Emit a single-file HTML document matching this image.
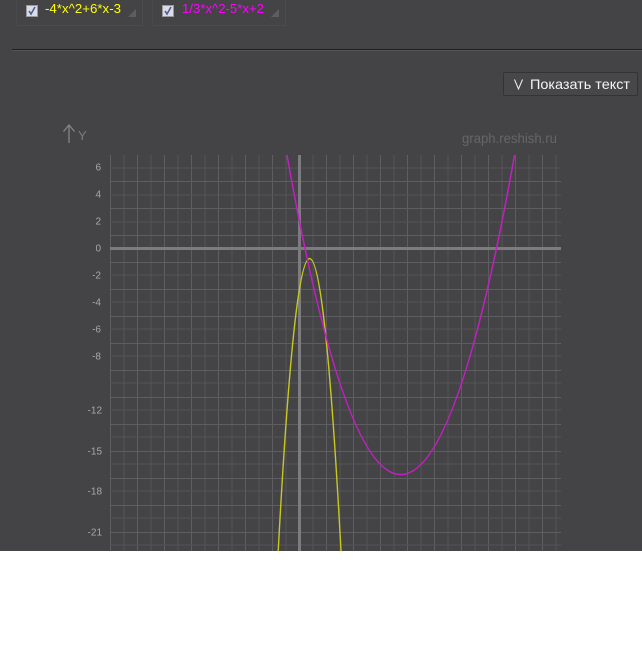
<!DOCTYPE html>
<html>
<head>
<meta charset="utf-8">
<style>
html,body{margin:0;padding:0;background:#fff;}
body{width:642px;height:656px;overflow:hidden;position:relative;font-family:"Liberation Sans",sans-serif;}
svg{position:absolute;left:0;top:0;display:block;}
</style>
</head>
<body>
<svg width="642" height="656" viewBox="0 0 642 656" xmlns="http://www.w3.org/2000/svg" font-family="Liberation Sans, sans-serif">
  <rect x="0" y="0" width="642" height="551" fill="#444446"/>

  <!-- Top equation boxes -->
  <path d="M16.5 0V25.5H142.5V0" fill="none" stroke="#4b4b4d"/>
  <path d="M152.5 0V25.5H285.5V0" fill="none" stroke="#4b4b4d"/>
  <polygon points="136,9 136,17 128,17" fill="#5e5e60"/>
  <polygon points="279,9 279,17 271,17" fill="#5e5e60"/>

  <rect x="26.5" y="5.5" width="11" height="11" fill="#dcdce6" stroke="#9a9a9e"/>
  <path d="M29 11l2 3 4-7" fill="none" stroke="#4a5f9c" stroke-width="1.6"/>
  <rect x="162.5" y="5.5" width="11" height="11" fill="#dcdce6" stroke="#9a9a9e"/>
  <path d="M165 11l2 3 4-7" fill="none" stroke="#4a5f9c" stroke-width="1.6"/>

  <text x="45" y="13" font-size="13" fill="#ffff00" textLength="76" lengthAdjust="spacingAndGlyphs">-4*x^2+6*x-3</text>
  <text x="182" y="13" font-size="13" fill="#ff00ff" textLength="82" lengthAdjust="spacingAndGlyphs">1/3*x^2-5*x+2</text>

  <!-- Divider -->
  <rect x="12" y="49" width="630" height="1" fill="#1f1f1f"/>
  <rect x="12" y="50" width="630" height="1" fill="#555557"/>

  <!-- Button -->
  <rect x="503.5" y="72.5" width="134" height="23" rx="1.5" fill="#474749" stroke="#333335"/>
  <path d="M514.5 79.5l4 9.5 4-9.5" fill="none" stroke="#f4f4f4" stroke-width="1"/>
  <text x="530" y="89" font-size="14" fill="#f4f4f4" textLength="100" lengthAdjust="spacingAndGlyphs">Показать текст</text>

  <!-- Y axis arrow and watermark -->
  <path d="M69 125V143M63.5 131.5L69 125L74.5 131.5" fill="none" stroke="#858587" stroke-width="1.3"/>
  <text x="78" y="140" font-size="13" fill="#7c7c7e">Y</text>
  <text x="462" y="143" font-size="14" fill="#666668" textLength="95" lengthAdjust="spacingAndGlyphs">graph.reshish.ru</text>

  <!-- Dim vertical lines -->
  <g stroke="#545456" stroke-width="1">
    <path d="M124 155V551M151 155V551M178 155V551M205 155V551M232 155V551M259 155V551M286 155V551M313 155V551M340 155V551M367 155V551M394 155V551M421 155V551M448 155V551M475 155V551M502 155V551M529 155V551M556 155V551"/>
  </g>
  <!-- Bright vertical lines -->
  <g stroke="#5e5e60" stroke-width="1">
    <path d="M110.5 155V551M137.5 155V551M164.5 155V551M191.5 155V551M218.5 155V551M245.5 155V551M272.5 155V551M326.5 155V551M353.5 155V551M380.5 155V551M407.5 155V551M434.5 155V551M461.5 155V551M488.5 155V551M515.5 155V551M542.5 155V551"/>
  </g>
  <!-- Dim horizontal lines -->
  <g stroke="#545456" stroke-width="1">
    <path d="M110 168H561M110 195H561M110 222H561M110 275H561M110 302H561M110 329H561M110 356H561M110 383H561M110 410H561M110 437H561M110 464H561M110 491H561M110 518H561M110 545H561"/>
  </g>
  <!-- Bright horizontal lines -->
  <g stroke="#5e5e60" stroke-width="1">
    <path d="M110 181.5H561M110 208.5H561M110 235.5H561M110 262.5H561M110 289.5H561M110 316.5H561M110 343.5H561M110 370.5H561M110 397.5H561M110 424.5H561M110 451.5H561M110 478.5H561M110 505.5H561M110 532.5H561"/>
  </g>
  <!-- Axes -->
  <rect x="110" y="247" width="451" height="3" fill="#7c7c7e"/>
  <rect x="298" y="155" width="3" height="396" fill="#7c7c7e"/>

  <!-- Tick labels -->
  <g font-size="10" fill="#a8a8aa" text-anchor="end">
    <text x="101" y="170.5">6</text>
    <text x="101" y="197.5">4</text>
    <text x="101" y="224.5">2</text>
    <text x="101" y="251.5">0</text>
    <text x="101" y="278.5">-2</text>
    <text x="101" y="305.5">-4</text>
    <text x="101" y="332.5">-6</text>
    <text x="101" y="359.5">-8</text>
    <text x="102" y="413.5">-12</text>
    <text x="102" y="454.5">-15</text>
    <text x="102" y="494.5">-18</text>
    <text x="102" y="535.5">-21</text>
  </g>

  <!-- Curves -->
  <path d="M278.2 551Q309.6 -33.75 341 551" fill="none" stroke="#c8c81e" stroke-width="1.4"/>
  <path d="M286.96 155Q400.75 794.2 514.54 155" fill="none" stroke="#c41ec4" stroke-width="1.5"/>
</svg>
</body>
</html>
